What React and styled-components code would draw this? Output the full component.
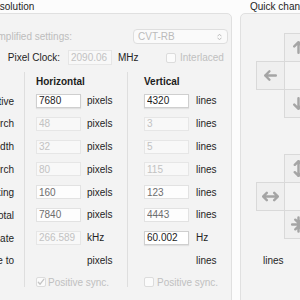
import React from 'react';
import styled, { createGlobalStyle } from 'styled-components';

const GlobalStyle = createGlobalStyle`
  html, body {
    margin: 0;
    padding: 0;
    width: 300px;
    height: 300px;
    overflow: hidden;
    background: #fcfcfc;
  }
  body {
    font-family: "Liberation Sans", Arial, sans-serif;
    font-size: 10px;
    color: #242424;
  }
`;

const tones = {
    on: { bg: '#ffffff', border: '#cfcfcf', color: '#1c1c1c', shadow: '0 1px 1px rgba(0,0,0,0.07)' },
    ro: { bg: '#fdfdfd', border: '#e2e2e2', color: '#6e6e6e', shadow: 'none' },
    off: { bg: '#f8f8f8', border: '#e6e6e6', color: '#c2c2c2', shadow: 'none' },
};

// the screenshot is a crop of a wider window, so the page starts left of the viewport
const Window = styled.div`
  display: flex;
  gap: 8px;
  margin-left: -60px;
  width: 460px;
`;

const Group = styled.section`
  display: flex;
  flex-direction: column;
  flex: none;
  width: ${p => p.$width}px;
`;

const GroupTitle = styled.div`
  height: 13px;
  line-height: 13px;
  padding-left: ${p => p.$indent}px;
  white-space: nowrap;
  color: #1e1e1e;
`;

const Box = styled.div`
  box-sizing: border-box;
  height: 300px;
  padding-top: ${p => p.$top}px;
  background: #f3f3f3;
  border: 1px solid #e0e0e0;
  border-radius: 5px;
`;

const FormRow = styled.div`
  display: flex;
  align-items: center;
  height: 15px;
  margin-top: ${p => p.$gap || 0}px;
`;

const FormLabel = styled.span`
  flex: none;
  width: ${p => p.$width}px;
  text-align: right;
  white-space: nowrap;
  color: ${p => (p.$disabled ? '#bdbdbd' : '#242424')};
`;

const Select = styled.div`
  box-sizing: border-box;
  display: flex;
  align-items: center;
  justify-content: space-between;
  width: 95px;
  height: 15px;
  margin-left: ${p => p.$offset}px;
  padding: 0 5px 0 4px;
  background: #fafafa;
  border: 1px solid #dedede;
  border-radius: 4px;
  color: #bababa;
`;

const Field = styled.input.attrs({ readOnly: true, tabIndex: -1 })`
  box-sizing: border-box;
  flex: none;
  width: ${p => p.$w || 45}px;
  height: ${p => p.$h || 14}px;
  margin: 0 0 0 ${p => p.$offset || 0}px;
  padding: 0 0 0 2px;
  font: inherit;
  outline: none;
  background: ${p => tones[p.$state].bg};
  border: 1px solid ${p => tones[p.$state].border};
  box-shadow: ${p => tones[p.$state].shadow};
  color: ${p => tones[p.$state].color};
  -webkit-text-fill-color: ${p => tones[p.$state].color};
`;

const Unit = styled.span`
  flex: none;
  width: ${p => (p.$width ? `${p.$width}px` : 'auto')};
  margin-left: ${p => p.$offset}px;
  white-space: nowrap;
`;

const Check = styled.span`
  box-sizing: border-box;
  flex: none;
  display: flex;
  align-items: center;
  justify-content: center;
  width: 10px;
  height: 10px;
  background: #fbfbfb;
  border: 1px solid #dcdcdc;
  border-radius: 2px;
`;

const CheckText = styled.span`
  margin-left: ${p => p.$offset}px;
  white-space: nowrap;
  color: #c0c0c0;
`;

const Table = styled.div`
  display: flex;
  margin-top: 7px;
`;

const Column = styled.div`
  box-sizing: border-box;
  display: flex;
  flex-direction: column;
  flex: none;
  width: ${p => p.$width}px;
  height: 215px;
  padding-left: ${p => p.$pad || 0}px;
  padding-right: ${p => p.$padRight || 0}px;
  border-left: ${p => (p.$sep ? '1px solid #dedede' : 'none')};
  text-align: ${p => p.$align || 'left'};
`;

const HeaderCell = styled.div`
  box-sizing: border-box;
  height: 17.6px;
  padding-top: 4px;
  line-height: 12px;
  font-weight: bold;
  color: #1c1c1c;
`;

const Cell = styled.div`
  display: flex;
  align-items: center;
  justify-content: ${p => (p.$end ? 'flex-end' : 'flex-start')};
  height: 22.85px;
  white-space: nowrap;
`;

const SyncCell = styled.div`
  box-sizing: border-box;
  display: flex;
  align-items: center;
  height: 15px;
  padding-top: 6px;
`;

const Pad = styled.div`
  display: grid;
  grid-template-columns: repeat(3, 28px);
  grid-auto-rows: 28px;
  margin: ${p => p.$top}px 0 0 15px;
`;

const PadCell = styled.div`
  box-sizing: border-box;
  display: flex;
  align-items: center;
  justify-content: center;
  width: 29px;
  height: 29px;
  margin: 0 -1px -1px 0;
  background: ${p => (p.$filled ? '#efefef' : 'transparent')};
  border: ${p => (p.$filled ? '1px solid #d9d9d9' : 'none')};
`;

const StepLabel = styled.div`
  margin: 17px 0 0 22px;
  line-height: 12px;
`;

const arrows = {
    left: 'M13 8H3 M7 4L3 8l4 4',
    right: 'M3 8h10 M9 4l4 4-4 4',
    up: 'M8 13V3 M4 7l4-4 4 4',
    down: 'M8 3v10 M4 9l4 4 4-4',
    growH: 'M1 8h14 M4.5 4.5L1 8l3.5 3.5 M11.5 4.5L15 8l-3.5 3.5',
    growV: 'M8 1v14 M4.5 4.5L8 1l3.5 3.5 M4.5 11.5L8 15l3.5-3.5',
    shrinkV: 'M2 8h12 M8 1.5v4.5 M5 3.5l3 3 3-3 M8 14.5V10 M5 12.5l3-3 3 3',
    shrinkH: 'M8 2v12 M1.5 8h4.5 M3.5 5l3 3-3 3 M14.5 8H10 M12.5 5l-3 3 3 3',
};

const Arrow = ({ dir }) => (
    <svg width="17" height="17" viewBox="0 0 16 16" fill="none" stroke="#a5a5a5"
         strokeWidth="2.3" strokeLinecap="round" strokeLinejoin="round">
        <path d={arrows[dir]} />
    </svg>
);

const Box3 = ({ checked }) => (
    <Check>
        {checked && (
            <svg width="8" height="8" viewBox="0 0 8 8" fill="none" stroke="#c4c4c4"
                 strokeWidth="1.3" strokeLinecap="round" strokeLinejoin="round">
                <path d="M1.3 4.2l1.8 2L6.8 1.3" />
            </svg>
        )}
    </Check>
);

const rows = [
    { label: 'Active', h: ['7680', 'on'], v: ['4320', 'on'] },
    { label: 'Back porch', h: ['48', 'off'], v: ['3', 'off'] },
    { label: 'Sync width', h: ['32', 'off'], v: ['5', 'off'] },
    { label: 'Front porch', h: ['80', 'off'], v: ['115', 'off'] },
    { label: 'Blanking', h: ['160', 'ro'], v: ['123', 'ro'] },
    { label: 'Total', h: ['7840', 'ro'], v: ['4443', 'ro'] },
    { label: 'Rate', h: ['266.589', 'off'], v: ['60.002', 'on'], hu: 'kHz', vu: 'Hz' },
    { label: 'Scale to', h: null, v: null },
];

const padOne = [null, 'up', null, 'left', null, 'right', null, 'down', null];
const padTwo = [null, 'growV', null, 'growH', null, 'shrinkH', null, 'shrinkV', null];

const ArrowPad = ({ cells, top }) => (
    <Pad $top={top}>
        {cells.map((dir, i) => (
            <PadCell key={i} $filled={!!dir}>
                {dir && <Arrow dir={dir} />}
            </PadCell>
        ))}
    </Pad>
);

const App = () => {
    return (
        <>
            <GlobalStyle />
            <Window>
                <Group $width={292}>
                    <GroupTitle $indent={47}>Resolution</GroupTitle>
                    <Box $top={15}>
                        <FormRow>
                            <FormLabel $width={131} $disabled>Simplified settings:</FormLabel>
                            <Select $offset={61}>
                                <span>CVT-RB</span>
                                <svg width="5" height="8" viewBox="0 0 5 8" fill="none" stroke="#bcbcbc"
                                     strokeWidth="1" strokeLinecap="round" strokeLinejoin="round">
                                    <path d="M0.8 3L2.5 1.2 4.2 3 M0.8 5l1.7 1.8L4.2 5" />
                                </svg>
                            </Select>
                        </FormRow>
                        <FormRow $gap={6}>
                            <FormLabel $width={119}>Pixel Clock:</FormLabel>
                            <Field $offset={8} $w={44} $h={15} $state="off" value="2090.06" />
                            <Unit $offset={6} $width={48}>MHz</Unit>
                            <Box3 />
                            <CheckText $offset={4}>Interlaced</CheckText>
                        </FormRow>

                        <Table>
                            <Column $width={83} $padRight={10} $align="right">
                                <HeaderCell />
                                {rows.map(r => (
                                    <Cell key={r.label} $end>{r.label}</Cell>
                                ))}
                            </Column>
                            <Column $width={103} $pad={11} $sep>
                                <HeaderCell>Horizontal</HeaderCell>
                                {rows.map(r => (
                                    <Cell key={r.label}>
                                        {r.h ? <Field $state={r.h[1]} value={r.h[0]} /> : <Unit $offset={0} $width={45} />}
                                        <Unit $offset={6}>{r.hu || 'pixels'}</Unit>
                                    </Cell>
                                ))}
                                <SyncCell>
                                    <Box3 checked />
                                    <CheckText $offset={2}>Positive sync.</CheckText>
                                </SyncCell>
                            </Column>
                            <Column $width={105} $pad={16} $sep>
                                <HeaderCell>Vertical</HeaderCell>
                                {rows.map(r => (
                                    <Cell key={r.label}>
                                        {r.v ? <Field $state={r.v[1]} value={r.v[0]} /> : <Unit $offset={0} $width={45} />}
                                        <Unit $offset={7}>{r.vu || 'lines'}</Unit>
                                    </Cell>
                                ))}
                                <SyncCell>
                                    <Box3 />
                                    <CheckText $offset={3}>Positive sync.</CheckText>
                                </SyncCell>
                            </Column>
                        </Table>
                    </Box>
                </Group>

                <Group $width={160}>
                    <GroupTitle $indent={10}>Quick change</GroupTitle>
                    <Box $top={0}>
                        <ArrowPad cells={padOne} top={19} />
                        <ArrowPad cells={padTwo} top={37} />
                        <StepLabel>lines</StepLabel>
                    </Box>
                </Group>
            </Window>
        </>
    );
};

export default App;
